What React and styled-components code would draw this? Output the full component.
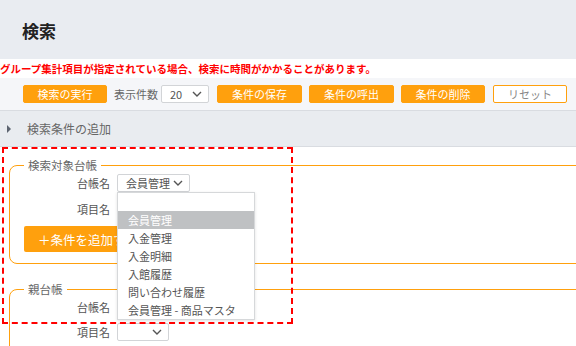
import styled, { createGlobalStyle } from "styled-components";

const GlobalStyle = createGlobalStyle`
  body {
    margin: 0;
    background: #fff;
    font-family: "Noto Sans CJK JP", "Noto Sans", sans-serif;
    overflow: hidden;
  }
`;

const ORANGE = "#ffa00d";

const Page = styled.div`
  width: 576px;
  height: 346px;
  overflow: hidden;
`;

const Header = styled.div`
  height: 59px;
  background: #e9ecf1;
  display: flex;
  align-items: center;
  padding-left: 22px;
`;

const Title = styled.h1`
  margin: 0 0 -2px;
  font-size: 17px;
  font-weight: 700;
  color: #222;
`;

const Warning = styled.div`
  height: 19px;
  line-height: 19px;
  font-size: 10.5px;
  font-weight: 700;
  color: #f00;
  white-space: nowrap;
  overflow: hidden;
`;

const Toolbar = styled.div`
  height: 32px;
  background: #f5f6f9;
  border-bottom: 1px solid #d9dce1;
  display: flex;
  align-items: center;
  padding-left: 23px;
`;

const ActionButton = styled.button`
  width: ${(p) => p.$w || 85}px;
  height: 18px;
  margin-right: ${(p) => p.$mr || 7}px;
  padding: 0;
  border: 1px solid ${ORANGE};
  border-radius: 2px;
  background: ${(p) => (p.$ghost ? "#fff" : ORANGE)};
  color: ${(p) => (p.$ghost ? "#888" : "#fff")};
  font-family: inherit;
  font-size: 11px;
  line-height: 16px;
`;

const ToolLabel = styled.span`
  font-size: 11px;
  color: #666;
  margin-right: 3px;
`;

const Select = styled.div`
  position: relative;
  box-sizing: border-box;
  flex-shrink: 0;
  width: ${(p) => p.$w}px;
  height: 18px;
  margin-right: ${(p) => p.$mr || 0}px;
  border: 1px solid #d2d4d7;
  border-radius: 2px;
  background: #fff;
  display: flex;
  align-items: center;
  justify-content: space-between;
  padding: 0 6px 0 8px;
  font-size: 11px;
  color: #555;
  white-space: nowrap;
`;

const Chevron = () => (
  <svg width="10" height="6" viewBox="0 0 10 6">
    <polyline
      points="1,1 5,5 9,1"
      fill="none"
      stroke="#555"
      strokeWidth="1.4"
    />
  </svg>
);

const Expander = styled.div`
  height: 35px;
  background: #e9ecf0;
  border-bottom: 1px solid #d9dce1;
  display: flex;
  align-items: center;
  padding-left: 7px;
  font-size: 12px;
  color: #666;
`;

const Arrow = styled.span`
  width: 0;
  height: 0;
  border-top: 4px solid transparent;
  border-bottom: 4px solid transparent;
  border-left: 4px solid #5d6470;
  margin-right: 16px;
`;

const Content = styled.div`
  position: relative;
  padding-top: 10px;
`;

const Group = styled.fieldset`
  width: 620px;
  margin: 0 0 17px 9px;
  padding: 0 0 ${(p) => p.$pb || 11}px 14px;
  border: 1px solid ${ORANGE};
  border-radius: 8px 0 0 8px;
`;

const Legend = styled.legend`
  padding: 0 4px;
  font-size: 11.5px;
  line-height: 16px;
  color: #666;
`;

const Row = styled.div`
  display: flex;
  align-items: center;
  height: 18px;
  margin-top: ${(p) => p.$mt ?? 8}px;
`;

const Label = styled.span`
  width: 86px;
  text-align: right;
  margin-right: 7px;
  font-size: 11px;
  color: #555;
`;

const AddButton = styled.button`
  display: block;
  margin-top: 8px;
  width: 122px;
  height: 26px;
  border: none;
  border-radius: 2px;
  background: ${ORANGE};
  color: #fff;
  font-family: inherit;
  font-size: 12.5px;
  text-align: left;
  padding-left: 14px;
`;

const Menu = styled.ul`
  position: absolute;
  top: 17px;
  left: -1px;
  z-index: 2;
  width: 136px;
  margin: 0;
  padding: 0;
  list-style: none;
  background: #fff;
  border: 1px solid #d6d8da;
  box-shadow: 0 1px 3px rgba(0, 0, 0, 0.12);
`;

const MenuItem = styled.li`
  height: 18px;
  line-height: 18px;
  padding-left: 10px;
  font-size: 11px;
  white-space: nowrap;
  color: ${(p) => (p.$active ? "#fff" : "#555")};
  background: ${(p) => (p.$active ? "#bfc1c3" : "transparent")};
`;

const Annotation = styled.div`
  position: absolute;
  top: 0;
  left: 2px;
  width: 291px;
  height: 177px;
  box-sizing: border-box;
  border: 2px dashed #f00;
  pointer-events: none;
  z-index: 3;
`;

const ledgers = [
  "",
  "会員管理",
  "入金管理",
  "入金明細",
  "入館履歴",
  "問い合わせ履歴",
  "会員管理 - 商品マスタ",
];

const App = () => {
  return (
    <Page>
      <GlobalStyle />
      <Header>
        <Title>検索</Title>
      </Header>
      <Warning>
        グループ集計項目が指定されている場合、検索に時間がかかることがあります。
      </Warning>
      <Toolbar>
        <ActionButton $w={84}>検索の実行</ActionButton>
        <ToolLabel>表示件数</ToolLabel>
        <Select $w={48} $mr={8}>
          <span>20</span>
          <Chevron />
        </Select>
        <ActionButton>条件の保存</ActionButton>
        <ActionButton>条件の呼出</ActionButton>
        <ActionButton $w={84} $mr={8}>条件の削除</ActionButton>
        <ActionButton $w={74} $ghost>
          リセット
        </ActionButton>
      </Toolbar>
      <Expander>
        <Arrow />
        検索条件の追加
      </Expander>
      <Content>
        <Annotation />
        <Group>
          <Legend>検索対象台帳</Legend>
          <Row $mt={1}>
            <Label>台帳名</Label>
            <Select $w={73}>
              <span>会員管理</span>
              <Chevron />
              <Menu>
                {ledgers.map((name, idx) => (
                  <MenuItem key={idx} $active={idx === 1}>
                    {name}
                  </MenuItem>
                ))}
              </Menu>
            </Select>
          </Row>
          <Row>
            <Label>項目名</Label>
          </Row>
          <AddButton>＋条件を追加する</AddButton>
        </Group>
        <Group $pb={40}>
          <Legend>親台帳</Legend>
          <Row $mt={1}>
            <Label>台帳名</Label>
            <Select $w={52}>
              <span />
              <Chevron />
            </Select>
          </Row>
          <Row $mt={7}>
            <Label>項目名</Label>
            <Select $w={52}>
              <span />
              <Chevron />
            </Select>
          </Row>
        </Group>
      </Content>
    </Page>
  );
};

export default App;
